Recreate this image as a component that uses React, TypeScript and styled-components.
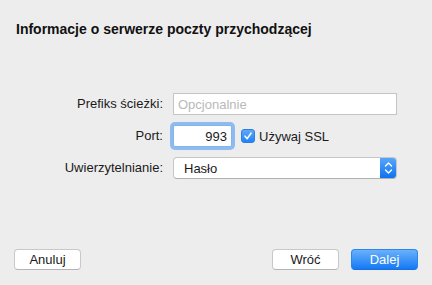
import React from "react";
import styled, { createGlobalStyle } from "styled-components";

const Global = createGlobalStyle`
  html, body { margin: 0; padding: 0; background: #ededed; }
  body { font-family: "Liberation Sans", Arial, sans-serif; font-size: 13px; color: #1a1a1a; }
`;

const Window = styled.div`
  width: 432px;
  height: 285px;
  display: flex;
  flex-direction: column;
  box-sizing: border-box;
  background: #ededed;
`;

const Title = styled.h1`
  margin: 0;
  padding: 21px 0 0 16px;
  font-size: 14px;
  line-height: 16px;
  font-weight: bold;
  color: #111;
`;

const Form = styled.div`
  display: grid;
  grid-template-columns: 163px 224px;
  column-gap: 10px;
  row-gap: 9px;
  margin-top: 56px;
  align-items: center;
`;

const Label = styled.label`
  text-align: right;
  font-size: 13px;
  line-height: 16px;
  color: #1a1a1a;
`;

const TextField = styled.div<{ $focused?: boolean; $width?: number }>`
  box-sizing: border-box;
  height: 22px;
  width: ${(p) => (p.$width ? `${p.$width}px` : "100%")};
  background: #fff;
  border: 1px solid ${(p) => (p.$focused ? "#86b4ea" : "#c4c4c4")};
  box-shadow: ${(p) => (p.$focused ? "0 0 0 3px #8cbcf2" : "none")};
  border-radius: ${(p) => (p.$focused ? "2px" : "0")};
  display: flex;
  align-items: center;
  padding: 0 4px;
  font-size: 13px;
  justify-content: ${(p) => (p.$focused ? "flex-end" : "flex-start")};
`;

const Placeholder = styled.span`
  color: #b9b9b9;
`;

const PortRow = styled.div`
  display: flex;
  align-items: center;
  gap: 9px;
  height: 24px;
`;

const CheckWrap = styled.label`
  display: flex;
  align-items: center;
  gap: 4px;
  font-size: 13px;
  color: #1a1a1a;
`;

const CheckBox = styled.span`
  width: 14px;
  height: 14px;
  border-radius: 3px;
  background: linear-gradient(#5fa8fb, #1f83f6);
  border: 1px solid #2c7fe0;
  box-sizing: border-box;
  display: flex;
  align-items: center;
  justify-content: center;
`;

const Select = styled.div`
  box-sizing: border-box;
  height: 22px;
  background: #fff;
  border: 1px solid #c6c6c6;
  border-bottom-color: #b0b0b0;
  border-radius: 4px;
  display: flex;
  align-items: stretch;
  overflow: hidden;
`;

const SelectText = styled.span`
  flex: 1;
  display: flex;
  align-items: center;
  padding-left: 10px;
  font-size: 13px;
  color: #1a1a1a;
`;

const Stepper = styled.span`
  width: 16px;
  background: linear-gradient(#58a6fb, #0e72f0);
  display: flex;
  align-items: center;
  justify-content: center;
`;

const Footer = styled.div`
  margin-top: auto;
  padding: 0 14px 15px 14px;
  display: flex;
  align-items: center;
  gap: 12px;
`;

const Spacer = styled.div`
  flex: 1;
`;

const Button = styled.button<{ $primary?: boolean }>`
  box-sizing: border-box;
  width: 67px;
  height: 21px;
  padding: 0;
  border-radius: 4px;
  font-family: "Liberation Sans", Arial, sans-serif;
  font-size: 13px;
  line-height: 19px;
  border: 1px solid ${(p) => (p.$primary ? "#2c86f0" : "#c8c8c8")};
  border-bottom-color: ${(p) => (p.$primary ? "#1a6fe0" : "#b4b4b4")};
  background: ${(p) =>
    p.$primary ? "linear-gradient(#6ab1fb, #1479f5)" : "#fff"};
  color: ${(p) => (p.$primary ? "#fff" : "#1a1a1a")};
`;

export default function App() {
  return (
    <Window>
      <Global />
      <Title>Informacje o serwerze poczty przychodzącej</Title>
      <Form>
        <Label>Prefiks ścieżki:</Label>
        <TextField>
          <Placeholder>Opcjonalnie</Placeholder>
        </TextField>
        <Label>Port:</Label>
        <PortRow>
          <TextField $focused $width={59}>993</TextField>
          <CheckWrap>
            <CheckBox>
              <svg width="10" height="10" viewBox="0 0 10 10">
                <path d="M2 5.2 L4.2 7.6 L8 2.2" stroke="#fff" strokeWidth="1.6" fill="none" strokeLinecap="round" strokeLinejoin="round" />
              </svg>
            </CheckBox>
            Używaj SSL
          </CheckWrap>
        </PortRow>
        <Label>Uwierzytelnianie:</Label>
        <Select>
          <SelectText>Hasło</SelectText>
          <Stepper>
            <svg width="9" height="14" viewBox="0 0 9 14">
              <path d="M1.5 5 L4.5 2 L7.5 5" stroke="#fff" strokeWidth="1.4" fill="none" strokeLinecap="round" strokeLinejoin="round" />
              <path d="M1.5 9 L4.5 12 L7.5 9" stroke="#fff" strokeWidth="1.4" fill="none" strokeLinecap="round" strokeLinejoin="round" />
            </svg>
          </Stepper>
        </Select>
      </Form>
      <Footer>
        <Button>Anuluj</Button>
        <Spacer />
        <Button>Wróć</Button>
        <Button $primary>Dalej</Button>
      </Footer>
    </Window>
  );
}
